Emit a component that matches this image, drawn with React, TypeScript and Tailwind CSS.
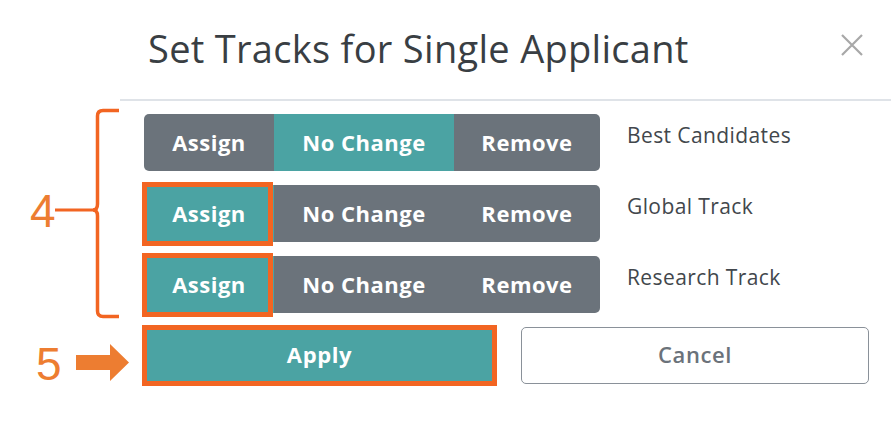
import React from 'react';

// Track rows of the dialog: which segment is active and whether Assign is highlighted
interface TrackRow {
  label: string;
  active: 'assign' | 'none' | 'remove';
  highlight: boolean;
}

const rows: TrackRow[] = [
  { label: 'Best Candidates', active: 'none', highlight: false },
  { label: 'Global Track', active: 'assign', highlight: true },
  { label: 'Research Track', active: 'assign', highlight: true },
];

const TEAL = 'bg-[#4ba3a3]';
const GREY = 'bg-[#6b737b]';

function SegmentGroup({ row }: { row: TrackRow }) {
  return (
    <div className="flex h-[57px] w-[456px] text-[22px] font-bold tracking-[0.5px] text-white">
      <div
        className={`relative flex w-[130px] items-center justify-center ${
          row.active === 'assign' ? TEAL : GREY
        } ${row.highlight ? '' : 'rounded-l-[5px]'}`}
      >
        Assign
        {row.highlight && (
          <span className="pointer-events-none absolute -top-[3px] -bottom-[4px] -left-[2px] right-[1px] border-[5px] border-[#f26522]" />
        )}
      </div>
      <div
        className={`flex w-[180px] items-center justify-center ${row.active === 'none' ? TEAL : GREY}`}
      >
        No Change
      </div>
      <div
        className={`flex w-[146px] items-center justify-center rounded-r-[5px] ${
          row.active === 'remove' ? TEAL : GREY
        }`}
      >
        Remove
      </div>
    </div>
  );
}

export default function App() {
  return (
    <div className="h-[424px] w-[891px] overflow-hidden bg-white font-['Open_Sans','Noto_Sans',sans-serif]">
      {/* Header */}
      <header className="ml-[120px] flex h-[101px] items-center justify-between border-b-2 border-[#dfe3e8] pl-[28px] pr-[28px]">
        <h2 className="-mt-[3px] text-[38px] font-medium tracking-[0.3px] text-[#393e43]">
          Set Tracks for Single Applicant
        </h2>
        <svg width="22" height="22" viewBox="0 0 22 22" className="-mt-[9px]">
          <path d="M1 1 L21 21 M21 1 L1 21" stroke="#a8a8a8" strokeWidth="2.2" />
        </svg>
      </header>

      {/* Body */}
      <div className="grid grid-cols-[144px_1fr] pt-[13px]">
        {/* Annotation 4 */}
        <div className="relative">
          <span className="absolute left-[30px] top-[74px] text-[46px] leading-none text-[#ed7d31] font-['Liberation_Sans',sans-serif]">
            4
          </span>
          <svg className="absolute left-0 -top-[10px]" width="144" height="220" viewBox="0 0 144 220" fill="none">
            <path
              d="M119 6.5 H103 Q97.5 6.5 97.5 12 V100 Q97.5 106 93 106 Q97.5 106 97.5 112 V207 Q97.5 212.5 103 212.5 H119"
              stroke="#f26522"
              strokeWidth="3.5"
            />
            <path d="M55 106 H95" stroke="#f26522" strokeWidth="3" />
          </svg>
        </div>

        <div className="flex flex-col gap-[14px]">
          {rows.map((row) => (
            <div key={row.label} className="flex items-start">
              <SegmentGroup row={row} />
              <span className="ml-[27px] pt-[8px] text-[21px] leading-[26px] tracking-[0.4px] text-[#42474c]">
                {row.label}
              </span>
            </div>
          ))}
        </div>

        {/* Annotation 5 */}
        <div className="relative mt-[14px]">
          <span className="absolute left-[36px] top-[14px] text-[46px] leading-none text-[#ed7d31] font-['Liberation_Sans',sans-serif]">
            5
          </span>
          <svg className="absolute left-0 top-0" width="144" height="60" viewBox="0 0 144 60">
            <path d="M76 28 H110 V17 L129 35.5 L110 54 V43 H76 Z" fill="#ed7d31" />
          </svg>
        </div>

        <div className="mt-[14px] flex gap-[26px]">
          <button className="h-[57px] w-[351px] bg-[#4ba3a3] pb-[3px] text-[22px] font-bold tracking-[0.6px] text-white outline-[5px] outline-solid outline-[#f26522] outline-offset-[-3px]">
            Apply
          </button>
          <button className="h-[57px] w-[348px] rounded-[5px] border-[1.5px] border-[#8a9199] bg-white pb-[3px] text-[22px] font-semibold tracking-[0.6px] text-[#6b727a]">
            Cancel
          </button>
        </div>
      </div>
    </div>
  );
}
